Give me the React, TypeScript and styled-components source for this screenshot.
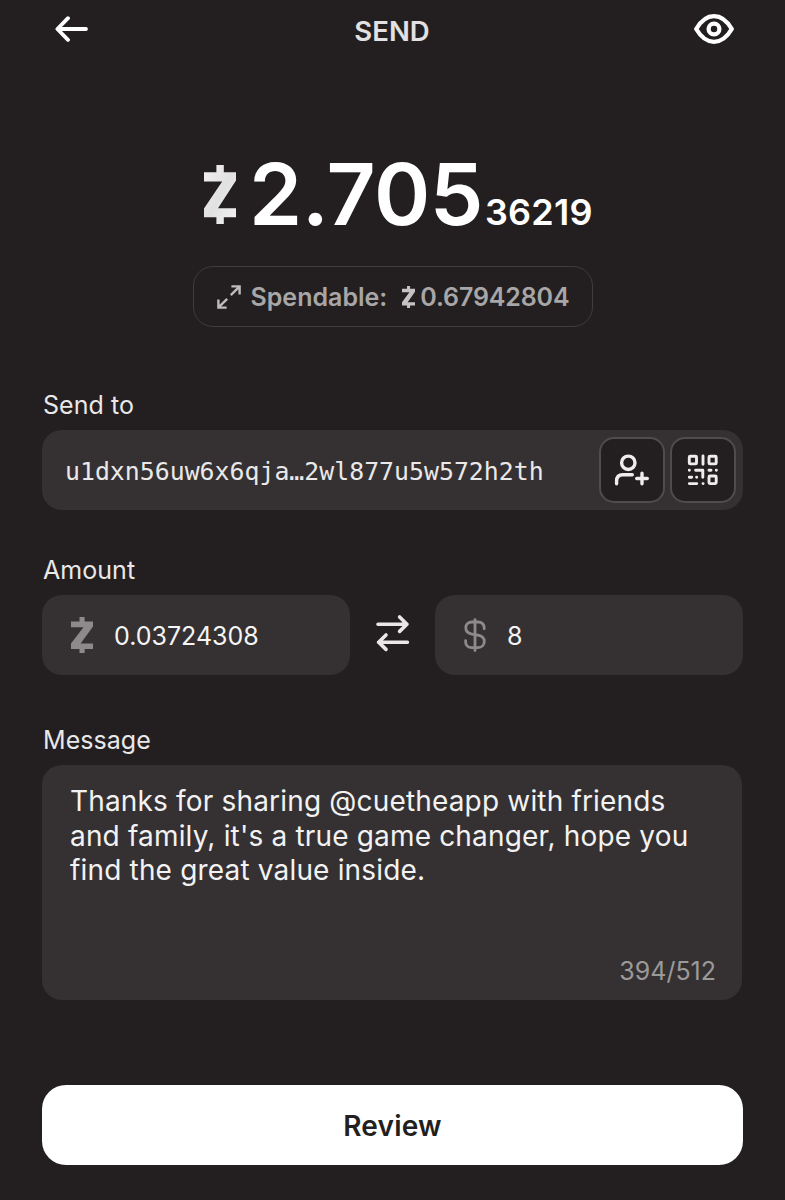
import React from "react";
import styled, { createGlobalStyle } from "styled-components";

const GlobalStyle = createGlobalStyle`
  * { box-sizing: border-box; }
  body {
    margin: 0;
    background: #231f20;
    color: #e9e8e8;
    font-family: Inter, "Liberation Sans", sans-serif;
  }
`;

const Screen = styled.main`
  width: 785px;
  height: 1200px;
  padding: 0 42px;
  display: flex;
  flex-direction: column;
  background: #231f20;
`;

const Header = styled.header`
  height: 58px;
  padding: 0 9px 0 13px;
  display: grid;
  grid-template-columns: 40px 1fr 40px;
  align-items: center;
`;

const Title = styled.h1`
  margin: 0;
  padding: 3px 5px 0 0;
  text-align: center;
  font-size: 27.5px;
  line-height: 32px;
  font-weight: 600;
  color: #e2e0e1;
`;

const BareButton = styled.button`
  display: flex;
  padding: 0;
  border: 0;
  background: none;
  color: #ffffff;
`;

const Balance = styled.div`
  height: 104px;
  margin: 91px 0 0 162px;
  display: flex;
  align-items: flex-start;
  color: #ffffff;
  font-weight: 600;
`;

const BalanceMark = styled.span`
  display: flex;
  margin: 16px 13px 0 0;
`;

const BalanceWhole = styled.span`
  font-size: 85.4px;
  line-height: 90px;
  letter-spacing: -0.5px;
`;

const BalanceFraction = styled.span`
  margin: 42px 0 0 2px;
  font-size: 36px;
  line-height: 42px;
  letter-spacing: 0.2px;
`;

const Spendable = styled.div`
  width: 400px;
  height: 61px;
  margin: 13px auto 0;
  padding-left: 23px;
  display: flex;
  align-items: center;
  border: 1px solid #403c3d;
  border-radius: 20px;
  font-size: 25px;
  font-weight: 600;
  color: #a8a6a6;
`;

const SpendableLabel = styled.span`
  margin: 0 15px 0 10px;
`;

const SpendableValue = styled.span`
  margin-left: 5px;
  letter-spacing: -0.15px;
`;

const Label = styled.label<{ $top: number }>`
  height: 30px;
  margin: ${(p) => p.$top}px 0 10px 1px;
  font-size: 25px;
  line-height: 30px;
  letter-spacing: 0.05px;
  color: #e9e8e8;
`;

const Field = styled.div<{ $width?: number; $pad: string }>`
  width: ${(p) => (p.$width ? `${p.$width}px` : "100%")};
  height: 80px;
  padding: ${(p) => p.$pad};
  display: flex;
  align-items: center;
  border-radius: 20px;
  background: #353132;
`;

const Address = styled.span`
  flex: 1;
  padding-top: 2px;
  font-family: "DejaVu Sans Mono", monospace;
  font-size: 24.85px;
  color: #eae8e9;
`;

const FieldButton = styled.button`
  width: 66px;
  height: 66px;
  margin-left: 5px;
  padding: 0;
  display: flex;
  align-items: center;
  justify-content: center;
  border: 2px solid #504c4d;
  border-radius: 15px;
  background: #231f20;
  color: #eeeced;
`;

const AmountRow = styled.div`
  display: flex;
  align-items: center;
  justify-content: space-between;
`;

const SwapButton = styled(BareButton)`
  padding-bottom: 4px;
  color: #e9e7e8;
`;

const AmountValue = styled.span`
  margin-left: 21px;
  padding-top: 1px;
  font-size: 25px;
  color: #f6f5f5;
`;

const MessageBox = styled.div`
  width: 700px;
  height: 235px;
  padding: 19px 26px 12px 28px;
  display: flex;
  flex-direction: column;
  justify-content: space-between;
  border-radius: 20px;
  background: #353132;
`;

const MessageText = styled.p`
  margin: 0;
  font-size: 28px;
  line-height: 34.5px;
  letter-spacing: 0.17px;
  color: #f3f2f2;
  white-space: pre-line;
`;

const Counter = styled.span`
  align-self: flex-end;
  font-size: 25px;
  line-height: 34px;
  color: #9c999a;
`;

const ReviewButton = styled.button`
  width: 701px;
  height: 80px;
  margin-top: 85px;
  padding: 2px 0 0;
  border: 0;
  border-radius: 24px;
  background: #ffffff;
  color: #231f20;
  font-family: inherit;
  font-size: 28px;
  font-weight: 600;
  letter-spacing: 0.2px;
`;

const ZecMark = ({ w, h, fill }: { w: number; h: number; fill: string }) => (
  <svg width={w} height={h} viewBox="0 0 32 59" preserveAspectRatio="none">
    <defs>
      <linearGradient id="silver" x1="0" y1="0" x2="1" y2="1">
        <stop offset="0" stopColor="#f2f0f1" />
        <stop offset="0.5" stopColor="#e2e1e2" />
        <stop offset="1" stopColor="#f2f1f2" />
      </linearGradient>
    </defs>
    <path
      fill={fill}
      d="M0 7.3H12.4V0h7.4v7.3H32V15.6L14 43.3h18v9H19.8V59h-7.4v-6.7H0V43.4L18.2 16.6H0z"
    />
  </svg>
);

const BackIcon = () => (
  <svg width="34" height="28" viewBox="0 0 34 28" fill="none" stroke="currentColor" strokeWidth="3.8" strokeLinecap="round" strokeLinejoin="round">
    <path d="M31 14H2.5M13 3.2 2.4 14 13 24.8" />
  </svg>
);

const EyeIcon = () => (
  <svg width="40" height="32" viewBox="0 0 40 32" fill="none" stroke="currentColor" strokeWidth="4.3" strokeLinejoin="round">
    <path d="M2.2 16C6.8 8.2 12.6 3.2 20 3.2S33.2 8.2 37.8 16C33.2 23.8 27.4 28.8 20 28.8S6.8 23.8 2.2 16z" />
    <circle cx="20" cy="16" r="5.4" />
  </svg>
);

const ExpandIcon = () => (
  <svg width="24" height="24" viewBox="0 0 24 24" fill="none" stroke="#bdbbbb" strokeWidth="2.4">
    <path d="M14.4 1.4h8.2v8.2M22.2 1.8 13.8 10.2M9.6 22.6H1.4v-8.2M1.8 22.2l8.4-8.4" />
  </svg>
);

const AddContactIcon = () => (
  <svg width="36" height="32" viewBox="0 0 36 32" fill="none" stroke="currentColor" strokeWidth="3.4" strokeLinecap="round">
    <circle cx="14.3" cy="8.8" r="6.7" />
    <path d="M2.6 29.7v-2.6c0-3.9 2.3-6.3 6.2-6.3h9.5M28 19.2v10.6M22.7 24.5h10.6" />
  </svg>
);

const QrIcon = () => (
  <svg width="32" height="32" viewBox="0 0 32 32" fill="none" stroke="currentColor" strokeWidth="2.9" strokeLinecap="round" strokeLinejoin="round">
    <rect x="2.3" y="2.3" width="7.2" height="7.6" rx="1" />
    <rect x="22" y="2.3" width="7.2" height="7.6" rx="1" />
    <rect x="22" y="22" width="7.2" height="7.6" rx="1" />
    <path d="M16 2v8.3M2.3 16.3h.1M8.6 16.3h7.2v7M22 16.3h2M29.3 16.3h.1M2.3 23.3h2.4M9.6 23.3h.1M2.3 29.6h7.5M16 29.6h.1" />
  </svg>
);

const SwapIcon = () => (
  <svg width="34" height="38" viewBox="0 0 34 38" fill="none" stroke="currentColor" strokeWidth="3.6" strokeLinecap="round" strokeLinejoin="round">
    <path d="M2 10.2h29M23.6 3l7.3 7.2-7.3 7.2M31.4 28.2H2.5M10 21l-7.3 7.2L10 35.4" />
  </svg>
);

const DollarIcon = () => (
  <svg width="22" height="34" viewBox="0 0 22 34" fill="none" stroke="#8d8a8b" strokeWidth="2.8" strokeLinecap="round">
    <path d="M11 1.6v31M20.2 10.8V9.8c0-3.4-2.5-5.8-6-5.8H8C4.4 4 1.8 6.2 1.8 9.7S4.2 15.4 8 16.1l6 1.1c4 .8 6.3 2.8 6.3 6.3S17.8 29.6 14 29.6H7.8c-3.7 0-6.2-2.4-6.2-5.9v-1" />
  </svg>
);

export default function App() {
  return (
    <>
      <GlobalStyle />
      <Screen>
        <Header>
          <BareButton aria-label="Back"><BackIcon /></BareButton>
          <Title>SEND</Title>
          <BareButton aria-label="Hide balance"><EyeIcon /></BareButton>
        </Header>

        <Balance>
          <BalanceMark><ZecMark w={32} h={59} fill="url(#silver)" /></BalanceMark>
          <BalanceWhole>2.705</BalanceWhole>
          <BalanceFraction>36219</BalanceFraction>
        </Balance>

        <Spendable>
          <ExpandIcon />
          <SpendableLabel>Spendable:</SpendableLabel>
          <ZecMark w={13} h={22} fill="#c4c2c2" />
          <SpendableValue>0.67942804</SpendableValue>
        </Spendable>

        <Label $top={63}>Send to</Label>
        <Field $pad="0 7px 0 23px">
          <Address>u1dxn56uw6x6qja…2wl877u5w572h2th</Address>
          <FieldButton aria-label="Add contact"><AddContactIcon /></FieldButton>
          <FieldButton aria-label="Scan code"><QrIcon /></FieldButton>
        </Field>

        <Label $top={45}>Amount</Label>
        <AmountRow>
          <Field $width={308} $pad="0 0 0 29px">
            <ZecMark w={22} h={36} fill="#8d8a8b" />
            <AmountValue>0.03724308</AmountValue>
          </Field>
          <SwapButton aria-label="Swap currencies"><SwapIcon /></SwapButton>
          <Field $width={308} $pad="0 0 0 29px">
            <DollarIcon />
            <AmountValue>8</AmountValue>
          </Field>
        </AmountRow>

        <Label $top={50}>Message</Label>
        <MessageBox>
          <MessageText>
            {"Thanks for sharing @cuetheapp with friends\nand family, it's a true game changer, hope you\nfind the great value inside."}
          </MessageText>
          <Counter>394/512</Counter>
        </MessageBox>

        <ReviewButton>Review</ReviewButton>
      </Screen>
    </>
  );
}
